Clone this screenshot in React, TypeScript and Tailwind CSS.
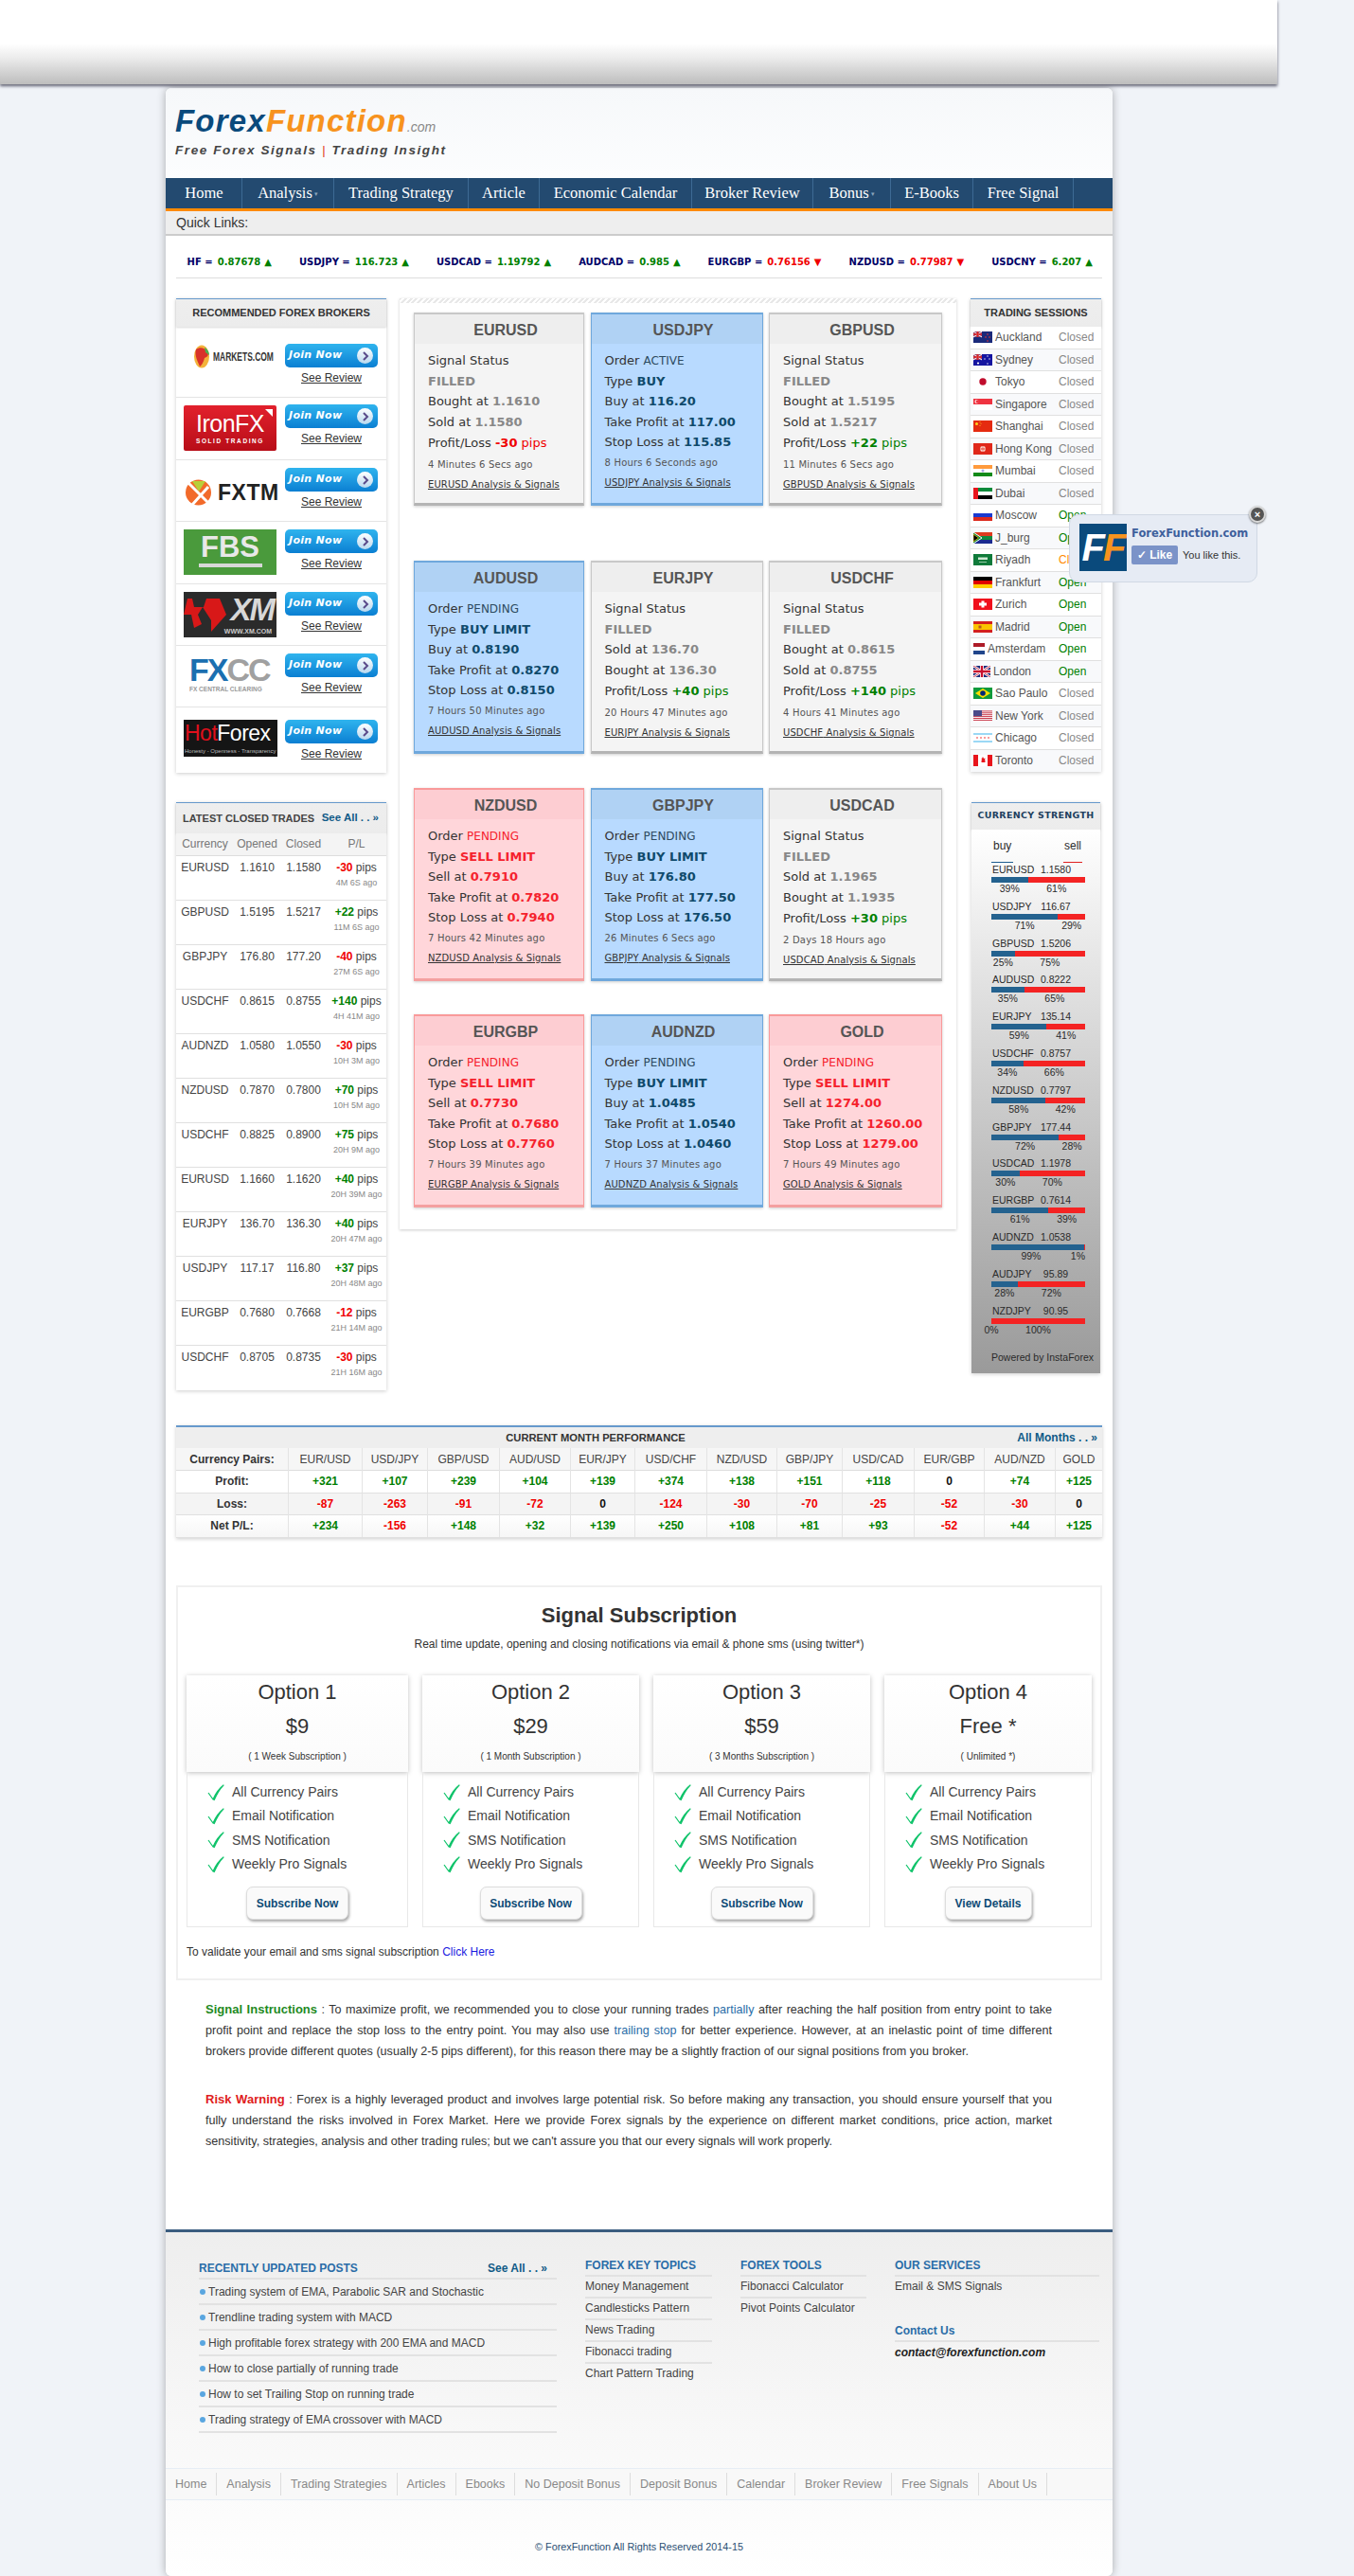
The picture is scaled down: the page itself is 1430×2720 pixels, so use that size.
import React from 'react';

type Tone = 'gray' | 'blue' | 'red';

interface Signal {
  pair: string;
  tone: Tone;
  status?: string;
  type?: string;
  lines: [string, string][];
  pl?: string;
  ago: string;
}

const signalRows: { top: string; cards: Signal[] }[] = [
  {
    top: 'mt-[10px]',
    cards: [
      { pair: 'EURUSD', tone: 'gray', lines: [['Bought at', '1.1610'], ['Sold at', '1.1580']], pl: '-30', ago: '4 Minutes 6 Secs ago' },
      { pair: 'USDJPY', tone: 'blue', status: 'ACTIVE', type: 'BUY', lines: [['Buy at', '116.20'], ['Take Profit at', '117.00'], ['Stop Loss at', '115.85']], ago: '8 Hours 6 Seconds ago' },
      { pair: 'GBPUSD', tone: 'gray', lines: [['Bought at', '1.5195'], ['Sold at', '1.5217']], pl: '+22', ago: '11 Minutes 6 Secs ago' },
    ],
  },
  {
    top: 'mt-[58px]',
    cards: [
      { pair: 'AUDUSD', tone: 'blue', status: 'PENDING', type: 'BUY LIMIT', lines: [['Buy at', '0.8190'], ['Take Profit at', '0.8270'], ['Stop Loss at', '0.8150']], ago: '7 Hours 50 Minutes ago' },
      { pair: 'EURJPY', tone: 'gray', lines: [['Sold at', '136.70'], ['Bought at', '136.30']], pl: '+40', ago: '20 Hours 47 Minutes ago' },
      { pair: 'USDCHF', tone: 'gray', lines: [['Bought at', '0.8615'], ['Sold at', '0.8755']], pl: '+140', ago: '4 Hours 41 Minutes ago' },
    ],
  },
  {
    top: 'mt-[36px]',
    cards: [
      { pair: 'NZDUSD', tone: 'red', status: 'PENDING', type: 'SELL LIMIT', lines: [['Sell at', '0.7910'], ['Take Profit at', '0.7820'], ['Stop Loss at', '0.7940']], ago: '7 Hours 42 Minutes ago' },
      { pair: 'GBPJPY', tone: 'blue', status: 'PENDING', type: 'BUY LIMIT', lines: [['Buy at', '176.80'], ['Take Profit at', '177.50'], ['Stop Loss at', '176.50']], ago: '26 Minutes 6 Secs ago' },
      { pair: 'USDCAD', tone: 'gray', lines: [['Sold at', '1.1965'], ['Bought at', '1.1935']], pl: '+30', ago: '2 Days 18 Hours ago' },
    ],
  },
  {
    top: 'mt-[35px]',
    cards: [
      { pair: 'EURGBP', tone: 'red', status: 'PENDING', type: 'SELL LIMIT', lines: [['Sell at', '0.7730'], ['Take Profit at', '0.7680'], ['Stop Loss at', '0.7760']], ago: '7 Hours 39 Minutes ago' },
      { pair: 'AUDNZD', tone: 'blue', status: 'PENDING', type: 'BUY LIMIT', lines: [['Buy at', '1.0485'], ['Take Profit at', '1.0540'], ['Stop Loss at', '1.0460']], ago: '7 Hours 37 Minutes ago' },
      { pair: 'GOLD', tone: 'red', status: 'PENDING', type: 'SELL LIMIT', lines: [['Sell at', '1274.00'], ['Take Profit at', '1260.00'], ['Stop Loss at', '1279.00']], ago: '7 Hours 49 Minutes ago' },
    ],
  },
];

const toneStyles = {
  gray: { card: 'bg-[#f4f4f4] border-[#c8c8c8] border-b-[#b4b4b4]', head: 'bg-[#eeeeee]', value: 'text-[#888888]', status: 'text-[#888888]' },
  blue: { card: 'bg-[#b8daff] border-[#6fa8dc] border-b-[#6fa8dc]', head: 'bg-[#b0d2f4]', value: 'text-[#0f4a6b]', status: 'text-[#2d4a60]' },
  red: { card: 'bg-[#ffd6da] border-[#f99a9a] border-b-[#f4a0a0]', head: 'bg-[#fdcdd2]', value: 'text-[#f5222d]', status: 'text-[#f5222d]' },
};

const SignalCard: React.FC<{ data: Signal; width: string }> = ({ data, width }) => {
  const tone = toneStyles[data.tone];
  const filled = data.tone === 'gray';
  return (
    <div className={`${width} h-[204px] border border-b-[3px] border-t-[2px] ${tone.card} shadow-[0_1px_3px_rgba(0,0,0,0.2)] font-['DejaVu_Sans',Verdana,sans-serif] text-[#333333]`}>
      <div className={`${tone.head} h-[31px] pl-[14px] text-center font-['Liberation_Sans',Arial,sans-serif] text-[16px] leading-[33px] font-bold text-[#555555]`}>
        {data.pair}
      </div>
      <div className="pl-[14px]">
        {filled ? (
          <div className="pt-[7px] text-[13px] leading-[21.7px]">
            <div>Signal Status</div>
            <div className={`font-bold ${tone.value}`}>FILLED</div>
            {data.lines.map(([label, value]) => (
              <div key={label}>
                {label} <span className={`font-bold ${tone.value}`}>{value}</span>
              </div>
            ))}
            <div>
              Profit/Loss{' '}
              {data.pl?.startsWith('-') ? (
                <span className="text-[#f00000]"><b>{data.pl}</b> pips</span>
              ) : (
                <span className="text-[#008000]"><b>{data.pl}</b> pips</span>
              )}
            </div>
          </div>
        ) : (
          <div className="pt-[7px] text-[13px] leading-[21.2px]">
            <div>
              Order <span className={`text-[12px] ${tone.status}`}>{data.status}</span>
            </div>
            <div>
              Type <span className={`font-bold ${tone.value}`}>{data.type}</span>
            </div>
            {data.lines.map(([label, value]) => (
              <div key={label}>
                {label} <span className={`font-bold ${tone.value}`}>{value}</span>
              </div>
            ))}
          </div>
        )}
        <div className="mt-[1px] text-[10px] leading-[22px] tracking-[0.2px] text-[#555555]">{data.ago}</div>
        <a className="block text-[10px] leading-[20px] tracking-[0.1px] whitespace-nowrap text-[#333333] underline">
          {data.pair} Analysis &amp; Signals
        </a>
      </div>
    </div>
  );
};

const PanelHead: React.FC<{ children: React.ReactNode; className?: string }> = ({ children, className }) => (
  <div className={`border-t border-t-[#6699cc] bg-gradient-to-b from-[#eeeeee] to-[#ececec] shadow-[0_1px_2px_rgba(0,0,0,0.15)] ${className ?? ''}`}>
    {children}
  </div>
);

const JoinButton = () => (
  <div className="flex h-[25px] w-[98px] items-center justify-between rounded-[5px] bg-gradient-to-b from-[#2fb4ee] to-[#0a7fd2] pr-[5px] pl-[4px]">
    <span className="font-['DejaVu_Sans',sans-serif] text-[11px] font-bold tracking-[0.3px] whitespace-nowrap text-white italic">Join Now</span>
    <span className="flex h-[17px] w-[17px] items-center justify-center rounded-full bg-gradient-to-b from-white to-[#b8d8ee]">
      <svg width="8" height="10" viewBox="0 0 8 10"><path d="M2 1l4 4-4 4" fill="none" stroke="#5a4a8a" strokeWidth="2" /></svg>
    </span>
  </div>
);

const MarketsLogo = () => (
  <div className="flex h-[27px] items-center pl-[10px]">
    <svg className="shrink-0" width="18" height="27" viewBox="0 0 18 27">
      <ellipse cx="9" cy="13.5" rx="8" ry="12" fill="#f3b23a" />
      <path d="M3 6c4-3 9-2 12 2 2 4 0 6-3 7-1 4-3 8-5 9-2-5-6-12-4-18z" fill="#d8322a" />
      <path d="M12 4c3 1 5 5 5 8l-4-3z" fill="#4caf50" />
    </svg>
    <span className="ml-[3px] inline-block origin-left scale-x-[0.65] text-[13px] font-bold whitespace-nowrap text-[#333333]">MARKETS.COM</span>
  </div>
);

const IronLogo = () => (
  <div className="relative h-[48px] w-[98px] rounded-[2px] bg-gradient-to-b from-[#e2202c] to-[#b80d18] pt-[6px] text-center text-white">
    <div className="font-['Liberation_Sans',sans-serif] text-[25px] leading-[27px] tracking-[-0.5px]">IronFX</div>
    <div className="font-['Liberation_Sans',sans-serif] text-[6.5px] leading-[10px] font-bold tracking-[1.6px]">SOLID TRADING</div>
    <div className="absolute top-[4px] right-[4px] h-0 w-0 border-t-[8px] border-l-[8px] border-t-white border-l-transparent" />
  </div>
);

const FxtmLogo = () => (
  <div className="flex h-[30px] items-center pl-[2px]">
    <svg className="shrink-0" width="27" height="30" viewBox="0 0 27 30">
      <circle cx="13.5" cy="15" r="13.5" fill="#f26a2a" />
      <path d="M7 3l7 11 7-11z" fill="#b8cf3a" />
      <path d="M3 5l21 21M24 9L7 28" stroke="#fff" strokeWidth="3" />
    </svg>
    <span className="ml-[7px] font-['Liberation_Sans',sans-serif] text-[23px] font-bold tracking-[0.5px] text-[#222222]">FXTM</span>
  </div>
);

const FbsLogo = () => (
  <div className="h-[48px] w-[98px] bg-[#4a9a3c] pt-[3px] text-center">
    <div className="font-['Liberation_Sans',sans-serif] text-[31px] leading-[32px] font-bold text-[#e8e8e8]">FBS</div>
    <div className="mx-auto mt-[1px] h-[4px] w-[67px] bg-[#d8d8d8]" />
  </div>
);

const XmLogo = () => (
  <div className="relative h-[48px] w-[98px] bg-[#2b2b2b] text-right">
    <svg className="absolute top-[6px] left-0" width="46" height="36" viewBox="0 0 46 36">
      <path d="M4 1h5l2 9h10l3-9h14l7 17-16 18V24L20 10 15 18l4 10-8 4-3-14H0z" fill="#d81818" />
    </svg>
    <div className="pr-[3px] font-['Liberation_Sans',sans-serif] text-[33px] leading-[38px] font-bold tracking-[-2px] text-[#d8d8d8] italic">XM</div>
    <div className="pr-[5px] font-['Liberation_Sans',sans-serif] text-[7px] leading-[8px] font-bold text-[#cccccc]">WWW.XM.COM</div>
  </div>
);

const FxccLogo = () => (
  <div className="pl-[6px]">
    <div className="flex h-[31px] items-center font-['Liberation_Sans',sans-serif] text-[34px] leading-[31px] font-bold tracking-[-2px]">
      <span className="text-[#1b6fb0]">FX</span>
      <span className="text-[#a0a0a0]">CC</span>
    </div>
    <div className="font-['Liberation_Sans',sans-serif] text-[6.5px] leading-[10px] font-bold whitespace-nowrap text-[#999999]">FX CENTRAL CLEARING</div>
  </div>
);

const HotLogo = () => (
  <div className="h-[39px] w-[99px] overflow-hidden bg-[#151515] pl-[1px] text-white">
    <div className="font-['Liberation_Sans',sans-serif] text-[23px] leading-[29px] tracking-[-0.5px] whitespace-nowrap">
      <span className="text-[#e0101c]">Hot</span>Forex
    </div>
    <div className="font-['Liberation_Sans',sans-serif] text-[6px] leading-[8px] whitespace-nowrap text-[#bbbbbb]">Honesty - Openness - Transparency</div>
  </div>
);

const brokers = [
  { logo: <MarketsLogo />, row: 'h-[75px] pt-[18px]', logoTop: 'mt-0' },
  { logo: <IronLogo />, row: 'h-[66px] pt-[7px]', logoTop: 'mt-px' },
  { logo: <FxtmLogo />, row: 'h-[65px] pt-[8px]', logoTop: 'mt-[11px]' },
  { logo: <FbsLogo />, row: 'h-[66px] pt-[8px]', logoTop: 'mt-0' },
  { logo: <XmLogo />, row: 'h-[65px] pt-[8px]', logoTop: 'mt-0' },
  { logo: <FxccLogo />, row: 'h-[65px] pt-[8px]', logoTop: 'mt-[2px]' },
  { logo: <HotLogo />, row: 'h-[69px] pt-[13px]', logoTop: 'mt-0' },
];

const trades = [
  ['EURUSD', '1.1610', '1.1580', '-30', '4M 6S ago'],
  ['GBPUSD', '1.5195', '1.5217', '+22', '11M 6S ago'],
  ['GBPJPY', '176.80', '177.20', '-40', '27M 6S ago'],
  ['USDCHF', '0.8615', '0.8755', '+140', '4H 41M ago'],
  ['AUDNZD', '1.0580', '1.0550', '-30', '10H 3M ago'],
  ['NZDUSD', '0.7870', '0.7800', '+70', '10H 5M ago'],
  ['USDCHF', '0.8825', '0.8900', '+75', '20H 9M ago'],
  ['EURUSD', '1.1660', '1.1620', '+40', '20H 39M ago'],
  ['EURJPY', '136.70', '136.30', '+40', '20H 47M ago'],
  ['USDJPY', '117.17', '116.80', '+37', '20H 48M ago'],
  ['EURGBP', '0.7680', '0.7668', '-12', '21H 14M ago'],
  ['USDCHF', '0.8705', '0.8735', '-30', '21H 16M ago'],
];

const R: React.FC<{ y: number; h: number; c: string }> = ({ y, h, c }) => <rect x="0" y={y} width="20" height={h} fill={c} />;

const flags: Record<string, React.ReactNode> = {
  Auckland: <><R y={0} h={12} c="#1a2a7a" /><rect width="9" height="6" fill="#9a4a70" /><path d="M0 0l9 6M9 0L0 6" stroke="#fff" strokeWidth="1" /><path d="M4.5 0v6M0 3h9" stroke="#d22" strokeWidth="1.4" /><circle cx="15" cy="3" r=".8" fill="#e33" /><circle cx="13" cy="6" r=".8" fill="#e33" /><circle cx="17" cy="6" r=".8" fill="#e33" /><circle cx="15" cy="10" r=".8" fill="#e33" /></>,
  Sydney: <><R y={0} h={12} c="#1414a0" /><rect width="9" height="6" fill="#9a4a70" /><path d="M0 0l9 6M9 0L0 6" stroke="#fff" strokeWidth="1" /><path d="M4.5 0v6M0 3h9" stroke="#d22" strokeWidth="1.4" /><circle cx="5" cy="9.5" r="1.1" fill="#fff" /><circle cx="15" cy="2" r=".7" fill="#fff" /><circle cx="12" cy="5" r=".7" fill="#fff" /><circle cx="17" cy="5" r=".7" fill="#fff" /><circle cx="15" cy="10" r=".7" fill="#fff" /></>,
  Tokyo: <><R y={0} h={12} c="#ffffff" /><circle cx="10" cy="6" r="3.7" fill="#c00c2c" /></>,
  Singapore: <><R y={0} h={6} c="#ef3340" /><R y={6} h={6} c="#ffffff" /><circle cx="3.5" cy="3" r="2" fill="#fff" /><circle cx="4.3" cy="3" r="1.8" fill="#ef3340" /></>,
  Shanghai: <><R y={0} h={12} c="#e52b10" /><circle cx="3.5" cy="3.5" r="1.5" fill="#ffd520" /><circle cx="7" cy="1.5" r=".5" fill="#ffd520" /><circle cx="8" cy="3.2" r=".5" fill="#ffd520" /><circle cx="7" cy="5.4" r=".5" fill="#ffd520" /></>,
  'Hong Kong': <><R y={0} h={12} c="#e0281a" /><circle cx="10" cy="6" r="3" fill="#fbd8d0" /><path d="M10 3v6M7 5l6 2M13 5L7 7" stroke="#e0281a" strokeWidth=".5" /></>,
  Mumbai: <><R y={0} h={4} c="#ff9a3c" /><R y={4} h={4} c="#ffffff" /><R y={8} h={4} c="#138a18" /><circle cx="10" cy="6" r="1.5" fill="#a8a8e0" /></>,
  Dubai: <><R y={0} h={4} c="#0a8a3a" /><R y={4} h={4} c="#ffffff" /><R y={8} h={4} c="#000000" /><rect width="5" height="12" fill="#e8141c" /></>,
  Moscow: <><R y={0} h={4} c="#ffffff" /><R y={4} h={4} c="#1a3ad0" /><R y={8} h={4} c="#dc2a1e" /></>,
  J_burg: <><R y={0} h={4} c="#e03a1e" /><R y={4} h={4} c="#108a40" /><R y={8} h={4} c="#1a2a90" /><path d="M0 0l9 6-9 6" fill="#108a40" stroke="#fff" strokeWidth="1" /><path d="M0 2l5.5 4L0 10z" fill="#000" stroke="#fc0" strokeWidth=".7" /></>,
  Riyadh: <><R y={0} h={12} c="#0f7a3a" /><rect x="5" y="3.5" width="10" height="2.5" fill="#cfe8d4" /><rect x="6" y="8" width="8" height=".7" fill="#cfe8d4" /></>,
  Frankfurt: <><R y={0} h={4} c="#000000" /><R y={4} h={4} c="#e00000" /><R y={8} h={4} c="#ffce00" /></>,
  Zurich: <><R y={0} h={12} c="#f0101c" /><path d="M8.5 2.5h3v2h2.5v3h-2.5v2h-3v-2H6v-3h2.5z" fill="#fff" /></>,
  Madrid: <><R y={0} h={3} c="#d4201e" /><R y={3} h={6} c="#fbc400" /><R y={9} h={3} c="#d4201e" /><rect x="5.5" y="4.5" width="3" height="3" fill="#b85a20" /></>,
  'Sao Paulo': <><R y={0} h={12} c="#0f9a3c" /><path d="M10 1l8 5-8 5-8-5z" fill="#fedf00" /><circle cx="10" cy="6" r="2.8" fill="#002776" /></>,
  'New York': <><R y={0} h={12} c="#ffffff" /><path d="M0 .9h20M0 2.8h20M0 4.7h20M0 6.6h20M0 8.5h20M0 10.4h20" stroke="#c8384a" strokeWidth="1" /><rect width="9" height="6.2" fill="#4a4a8a" /></>,
  Chicago: <><R y={0} h={12} c="#ffffff" /><R y={1} h={2} c="#9bd8f5" /><R y={9} h={2} c="#9bd8f5" /><circle cx="4" cy="6" r=".8" fill="#e22" /><circle cx="8" cy="6" r=".8" fill="#e22" /><circle cx="12" cy="6" r=".8" fill="#e22" /><circle cx="16" cy="6" r=".8" fill="#e22" /></>,
  Toronto: <><R y={0} h={12} c="#ffffff" /><rect width="5" height="12" fill="#e8141c" /><rect x="15" width="5" height="12" fill="#e8141c" /><path d="M10 2l1 2 1.5-.5-.5 3 1-.2-.8 1.6H8.8l-.8-1.6 1 .2-.5-3L9 4z" fill="#e8141c" /></>,
};

const sessions: [string, string][] = [
  ['Auckland', 'Closed'], ['Sydney', 'Closed'], ['Tokyo', 'Closed'], ['Singapore', 'Closed'], ['Shanghai', 'Closed'],
  ['Hong Kong', 'Closed'], ['Mumbai', 'Closed'], ['Dubai', 'Closed'], ['Moscow', 'Open'], ['J_burg', 'Open'],
  ['Riyadh', 'Closing'], ['Frankfurt', 'Open'], ['Zurich', 'Open'], ['Madrid', 'Open'], ['Amsterdam', 'Open'],
  ['London', 'Open'], ['Sao Paulo', 'Closed'], ['New York', 'Closed'], ['Chicago', 'Closed'], ['Toronto', 'Closed'],
];

const FlagIcon: React.FC<{ name: string }> = ({ name }) => {
  if (name === 'Amsterdam') {
    return (
      <svg className="mr-[3px] shrink-0" width="12" height="12" viewBox="0 0 12 12">
        <rect width="12" height="4" fill="#ae1c28" /><rect y="4" width="12" height="4" fill="#fff" /><rect y="8" width="12" height="4" fill="#21468b" />
      </svg>
    );
  }
  if (name === 'London') {
    return (
      <svg className="mr-[3px] shrink-0" width="18" height="12" viewBox="0 0 18 12">
        <rect width="18" height="12" fill="#1a2a7a" /><path d="M0 0l18 12M18 0L0 12" stroke="#fff" strokeWidth="2.4" /><path d="M0 0l18 12M18 0L0 12" stroke="#c8102e" strokeWidth=".8" /><path d="M9 0v12M0 6h18" stroke="#fff" strokeWidth="4" /><path d="M9 0v12M0 6h18" stroke="#c8102e" strokeWidth="2.4" />
      </svg>
    );
  }
  return (
    <svg className="mr-[3px] shrink-0" width="20" height="12" viewBox="0 0 20 12">{flags[name]}</svg>
  );
};

const strength: [string, string, number][] = [
  ['EURUSD', '1.1580', 39], ['USDJPY', '116.67', 71], ['GBPUSD', '1.5206', 25], ['AUDUSD', '0.8222', 35],
  ['EURJPY', '135.14', 59], ['USDCHF', '0.8757', 34], ['NZDUSD', '0.7797', 58], ['GBPJPY', '177.44', 72],
  ['USDCAD', '1.1978', 30], ['EURGBP', '0.7614', 61], ['AUDNZD', '1.0538', 99], ['AUDJPY', '95.89', 28], ['NZDJPY', '90.95', 0],
];

const perfCols = ['EUR/USD', 'USD/JPY', 'GBP/USD', 'AUD/USD', 'EUR/JPY', 'USD/CHF', 'NZD/USD', 'GBP/JPY', 'USD/CAD', 'EUR/GBP', 'AUD/NZD', 'GOLD'];
const perfRows = [
  { label: 'Profit:', bg: 'bg-white', cells: ['+321', '+107', '+239', '+104', '+139', '+374', '+138', '+151', '+118', '0', '+74', '+125'] },
  { label: 'Loss:', bg: 'bg-[#f4f4f4]', cells: ['-87', '-263', '-91', '-72', '0', '-124', '-30', '-70', '-25', '-52', '-30', '0'] },
  { label: 'Net P/L:', bg: 'bg-gradient-to-b from-white to-[#f6f6f6]', cells: ['+234', '-156', '+148', '+32', '+139', '+250', '+108', '+81', '+93', '-52', '+44', '+125'] },
];
const perfGrid = 'grid grid-cols-[119px_78px_69px_76px_75px_68px_76px_74px_69px_76px_74px_75px_49px]';

const perfColor = (v: string) => (v.startsWith('+') ? 'text-[#008000]' : v.startsWith('-') ? 'text-[#f00000]' : 'text-[#111111]');

const options = [
  { name: 'Option 1', price: '$9', note: '( 1 Week Subscription )', cta: 'Subscribe Now', width: 'w-[234px]', btn: 'w-[108px]' },
  { name: 'Option 2', price: '$29', note: '( 1 Month Subscription )', cta: 'Subscribe Now', width: 'w-[229px]', btn: 'w-[108px]' },
  { name: 'Option 3', price: '$59', note: '( 3 Months Subscription )', cta: 'Subscribe Now', width: 'w-[229px]', btn: 'w-[108px]' },
  { name: 'Option 4', price: 'Free *', note: '( Unlimited *)', cta: 'View Details', width: 'w-[219px]', btn: 'w-[92px]' },
];

const features = ['All Currency Pairs', 'Email Notification', 'SMS Notification', 'Weekly Pro Signals'];

const posts = [
  'Trading system of EMA, Parabolic SAR and Stochastic',
  'Trendline trading system with MACD',
  'High profitable forex strategy with 200 EMA and MACD',
  'How to close partially of running trade',
  'How to set Trailing Stop on running trade',
  'Trading strategy of EMA crossover with MACD',
];

const navItems = [
  { label: 'Home', w: 'w-[80px]' },
  { label: 'Analysis', w: 'w-[97px]', caret: true },
  { label: 'Trading Strategy', w: 'w-[142px]' },
  { label: 'Article', w: 'w-[75px]' },
  { label: 'Economic Calendar', w: 'w-[161px]' },
  { label: 'Broker Review', w: 'w-[128px]' },
  { label: 'Bonus', w: 'w-[82px]', caret: true },
  { label: 'E-Books', w: 'w-[87px]' },
  { label: 'Free Signal', w: 'w-[106px]' },
];

const ticker: [string, string, boolean][] = [
  ['USDCHF', '0.87678', true], ['USDJPY', '116.723', true], ['USDCAD', '1.19792', true], ['AUDCAD', '0.985', true],
  ['EURGBP', '0.76156', false], ['NZDUSD', '0.77987', false], ['USDCNY', '6.207', true],
];

const bottomLinks = ['Home', 'Analysis', 'Trading Strategies', 'Articles', 'Ebooks', 'No Deposit Bonus', 'Deposit Bonus', 'Calendar', 'Broker Review', 'Free Signals', 'About Us'];

const FootTitle: React.FC<{ children: React.ReactNode }> = ({ children }) => (
  <div className="h-[21px] border-b-2 border-b-[#e2e2e2] text-[12px] leading-[18px] font-bold text-[#2a6da8]">{children}</div>
);

export default function App() {
  return (
    <div className="relative h-[2720px] w-full overflow-hidden bg-[#f0f3f8] font-['Liberation_Sans',Arial,sans-serif]">
      <div className="relative z-10 h-[89px] w-[1349px] bg-gradient-to-b from-white from-[52%] via-[#eaeaea] via-[70%] to-[#bdbdbd] shadow-[0_2px_3px_rgba(40,40,60,0.7)]" />

      <div className="relative mt-[4px] ml-[175px] h-[2627px] w-[1000px] rounded-[6px] bg-white shadow-[0_0_10px_rgba(0,0,0,0.3)]">
        <div className="h-[95px] rounded-t-[6px] bg-gradient-to-b from-[#f6f8fa] to-[#fcfdfe] pt-[19px] pl-[10px]">
          <div className="text-[33px] leading-[32px] font-bold tracking-[1.2px] whitespace-nowrap italic">
            <span className="text-[#0a4a7c]">Forex</span>
            <span className="text-[#f7931e]">Function</span>
            <span className="text-[14px] font-normal tracking-normal text-[#888888]">.com</span>
          </div>
          <div className="mt-[1px] text-[13.5px] leading-[15px] font-bold tracking-[1.6px] whitespace-nowrap text-[#444444] italic">
            Free Forex Signals <span className="font-normal text-[#e0401c]">|</span> Trading Insight
          </div>
        </div>

        <nav className="flex h-[32px] bg-[#234a70] pl-px font-['Liberation_Serif',serif] text-[16.5px] leading-[32px] text-white">
          {navItems.map((item) => (
            <a key={item.label} className={`${item.w} border-r border-r-[#3d6a94] text-center whitespace-nowrap`}>
              {item.label}
              {item.caret && <span className="ml-[2px] align-middle text-[7px] text-[#8aa4bc]">▾</span>}
            </a>
          ))}
        </nav>
        <div className="h-[3px] bg-[#ff8a00]" />
        <div className="h-[26px] border-b-2 border-b-[#cccccc] bg-[#eeeeee] pl-[11px] text-[14px] leading-[24px] text-[#333333]">Quick Links:</div>

        <div className="mx-[11px] h-[45px] border-b border-b-[#dddddd] pt-[20px]">
          <div className="ml-[11px] flex w-[957px] justify-end gap-[29px] overflow-hidden font-['DejaVu_Sans',sans-serif] text-[10px] leading-[16px] font-bold whitespace-nowrap">
            {ticker.map(([pair, rate, up]) => (
              <span key={pair} className="flex shrink-0 text-[#000066]">
                <span>{pair} =</span>
                <span className={`ml-[5px] ${up ? 'text-[#008000]' : 'text-[#f00000]'}`}>{rate}</span>
                <span className={`ml-[4px] ${up ? 'text-[#008000]' : 'text-[#f00000]'}`}>{up ? '▲' : '▼'}</span>
              </span>
            ))}
          </div>
        </div>

        <div className="mt-[21px] flex gap-[14px] pl-[11px]">
          <div className="w-[222px]">
            <div className="h-[501px] shadow-[0_1px_4px_rgba(0,0,0,0.2)]">
              <PanelHead className="h-[30px] text-center text-[11px] leading-[28px] font-bold text-[#333333]">RECOMMENDED FOREX BROKERS</PanelHead>
              {brokers.map((b, i) => (
                <div key={i} className={`flex border-b border-b-[#e4e4e4] pl-[8px] last:border-b-0 ${b.row}`}>
                  <div className={`w-[98px] shrink-0 ${b.logoTop}`}>{b.logo}</div>
                  <div className="ml-[9px]">
                    <JoinButton />
                    <a className="mt-[4px] block text-center text-[12px] leading-[14px] text-[#333333] underline">See Review</a>
                  </div>
                </div>
              ))}
            </div>

            <div className="mt-[31px] h-[621px] shadow-[0_1px_4px_rgba(0,0,0,0.2)]">
              <PanelHead className="flex h-[33px] items-center justify-between pr-[8px] pl-[7px]">
                <span className="text-[11px] font-bold whitespace-nowrap text-[#444444]">LATEST CLOSED TRADES</span>
                <span className="text-[11.5px] font-bold whitespace-nowrap text-[#105a87]">See All . . »</span>
              </PanelHead>
              <div className="grid h-[24px] grid-cols-[61px_49px_49px_63px] border-b border-b-[#dddddd] bg-[#f4f4f4] text-center text-[12px] leading-[22px] text-[#777777]">
                <span>Currency</span>
                <span>Opened</span>
                <span>Closed</span>
                <span>P/L</span>
              </div>
              {trades.map(([pair, open, close, pl, ago], i) => (
                <div key={i} className="grid h-[47px] grid-cols-[61px_49px_49px_63px] border-b border-b-[#e0e0e0] pt-[3px] text-center text-[12px] leading-[18px] text-[#444444] last:border-b-0">
                  <span>{pair}</span>
                  <span>{open}</span>
                  <span>{close}</span>
                  <div className="whitespace-nowrap">
                    <b className={pl.startsWith('-') ? 'text-[#f00000]' : 'text-[#008000]'}>{pl}</b> pips
                    <div className="text-[9px] leading-[15px] text-[#888888]">{ago}</div>
                  </div>
                </div>
              ))}
            </div>
          </div>

          <div className="h-[983px] w-[588px] self-start shadow-[0_1px_3px_rgba(0,0,0,0.2)]">
            <div className="h-[5px] bg-[repeating-linear-gradient(135deg,#e8e8e8_0,#e8e8e8_2px,#ffffff_2px,#ffffff_4px)]" />
            <div className="pl-[15px]">
              {signalRows.map((row) => (
                <div key={row.cards[0].pair} className={`flex gap-[6.5px] ${row.top}`}>
                  <SignalCard data={row.cards[0]} width="w-[180px]" />
                  <SignalCard data={row.cards[1]} width="w-[182px]" />
                  <SignalCard data={row.cards[2]} width="w-[183px]" />
                </div>
              ))}
            </div>
          </div>

          <div className="ml-px w-[138px]">
            <div className="h-[500px] shadow-[0_1px_4px_rgba(0,0,0,0.2)]">
              <PanelHead className="h-[30px] text-center text-[11px] leading-[28px] font-bold text-[#333333]">TRADING SESSIONS</PanelHead>
              {sessions.map(([city, state], i) => (
                <div key={city} className={`flex h-[23.5px] items-center border-b border-b-[#e0e0e0] pl-[3px] text-[12px] last:border-b-0 ${i % 2 ? 'bg-[#f8f9fb]' : 'bg-white'}`}>
                  <FlagIcon name={city} />
                  <span className="w-[64px] flex-1 whitespace-nowrap text-[#555555]">{city}</span>
                  <span className={`w-[45px] shrink-0 ${state === 'Open' ? 'font-medium text-[#008000]' : state === 'Closing' ? 'text-[#ff8a00]' : 'text-[#888888]'}`}>
                    {state}
                  </span>
                </div>
              ))}
            </div>

            <div className="mt-[32px] ml-px h-[603px] w-[136px] shadow-[0_1px_4px_rgba(0,0,0,0.2)]">
              <PanelHead className="h-[29px] text-center font-['DejaVu_Sans',sans-serif] text-[9.5px] leading-[26px] font-bold tracking-[0.3px] text-[#223f5f]">CURRENCY STRENGTH</PanelHead>
              <div className="h-[574px] bg-gradient-to-b from-white to-[#9a9a9a] pl-[21px] text-[10.5px] text-[#2a2a2a]">
                <div className="flex h-[35px] w-[99px] justify-between pt-[8px] text-[12px] leading-[18px]">
                  <span className="w-[23px] border-b border-b-[#1e5c90] pl-[2px]">buy</span>
                  <span className="mr-[3px] w-[20px] border-b border-b-[#e02020] text-center">sell</span>
                </div>
                {strength.map(([pair, price, buy]) => (
                  <div key={pair} className="h-[38.8px] w-[99px]">
                    <div className="grid grid-cols-[42px_50px] pl-px leading-[15px]">
                      <span className="whitespace-nowrap">{pair}</span>
                      <span className="text-center">{price}</span>
                    </div>
                    <div className="flex h-[6px]">
                      <div className="bg-[#24628f]" style={{ width: `${buy}%` }} />
                      <div className="flex-1 bg-[#f42323]" />
                    </div>
                    <div className="flex leading-[12px]">
                      <div className="flex justify-center whitespace-nowrap" style={{ width: `${buy}%` }}>{buy}%</div>
                      <div className="flex flex-1 justify-center whitespace-nowrap">{100 - buy}%</div>
                    </div>
                  </div>
                ))}
                <div className="mt-[11px] text-[10.5px] leading-[14px] whitespace-nowrap">Powered by InstaForex</div>
              </div>
            </div>
          </div>
        </div>

        <div className="mx-[11px] mt-[37px] h-[119px] w-[978px] shadow-[0_1px_4px_rgba(0,0,0,0.2)]">
          <div className="relative h-[24px] border-t-2 border-t-[#6699cc] bg-[#eeeeee] pr-[92px] text-center text-[11.2px] leading-[22px] font-bold text-[#333333]">
            CURRENT MONTH PERFORMANCE
            <span className="absolute top-0 right-[5px] text-[12px] text-[#105a87]">All Months . . »</span>
          </div>
          <div className={`${perfGrid} h-[24px] border-b border-b-[#dddddd] bg-[#f6f6f6] text-center text-[12px] leading-[24px] text-[#444444]`}>
            <span className="border-r border-r-[#e4e4e4] font-bold text-[#333333]">Currency Pairs:</span>
            {perfCols.map((c) => (
              <span key={c} className="border-r border-r-[#e4e4e4] last:border-r-0">{c}</span>
            ))}
          </div>
          {perfRows.map((row) => (
            <div key={row.label} className={`${perfGrid} h-[23.6px] border-b border-b-[#e0e0e0] text-center text-[12px] leading-[23px] font-bold ${row.bg}`}>
              <span className="border-r border-r-[#e4e4e4] text-[#333333]">{row.label}</span>
              {row.cells.map((v, i) => (
                <span key={i} className={`border-r border-r-[#e4e4e4] last:border-r-0 ${perfColor(v)}`}>{v}</span>
              ))}
            </div>
          ))}
        </div>

        <div className="mx-[11px] mt-[50px] h-[417px] w-[978px] border-2 border-[#f0f0f0] text-[#333333]">
          <h2 className="mt-[16px] text-center text-[22px] leading-[28px] font-bold">Signal Subscription</h2>
          <p className="mt-[8px] text-center text-[12px] leading-[16px]">Real time update, opening and closing notifications via email &amp; phone sms (using twitter*)</p>
          <div className="mt-[25px] flex gap-[15px] pl-[9px]">
            {options.map((o) => (
              <div key={o.name} className={`${o.width} shrink-0`}>
                <div className="h-[102px] bg-gradient-to-b from-white to-[#fbfbfb] pt-[6px] text-center shadow-[0_1px_5px_rgba(0,0,0,0.25)]">
                  <div className="text-[22px] leading-[24px]">{o.name}</div>
                  <div className="mt-[12px] text-[22px] leading-[24px]">{o.price}</div>
                  <div className="mt-[13px] text-[10px] leading-[14px]">{o.note}</div>
                </div>
                <div className="h-[164px] border border-t-0 border-[#e8e8e8] pt-[9px] pl-[20px] text-center">
                  {features.map((f) => (
                    <div key={f} className="flex h-[25.3px] items-center text-[14px] text-[#444444]">
                      <svg className="mr-[7px] shrink-0" width="20" height="18" viewBox="0 0 20 18">
                        <path d="M2 9l5 7C10 9 14 4 18 1c-4 4-7 9-10 16" fill="#0fc36a" stroke="#0fc36a" strokeWidth="1.2" strokeLinejoin="round" />
                      </svg>
                      {f}
                    </div>
                  ))}
                  <button className={`${o.btn} mt-[11px] -ml-[20px] h-[35px] rounded-[7px] border border-[#dddddd] bg-[#fafafa] text-[12px] font-bold text-[#0d4a75] shadow-[1px_2px_3px_rgba(0,0,0,0.35)]`}>
                    {o.cta}
                  </button>
                </div>
              </div>
            ))}
          </div>
          <p className="mt-[18px] pl-[9px] text-[12px] leading-[16px]">
            To validate your email and sms signal subscription <a className="text-[#1a1ae0]">Click Here</a>
          </p>
        </div>

        <div className="mt-[20px] mr-[64px] ml-[42px] text-justify text-[12.6px] leading-[22px] text-[#333333]">
          <p>
            <b className="text-[13px] text-[#1f8a1f]">Signal Instructions</b> : To maximize profit, we recommended you to close your running trades <a className="text-[#2a6da8]">partially</a> after reaching the half position from entry point to take profit point and replace the stop loss to the entry point. You may also use <a className="text-[#2a6da8]">trailing stop</a> for better experience. However, at an inelastic point of time different brokers provide different quotes (usually 2-5 pips different), for this reason there may be a slightly fraction of our signal positions from you broker.
          </p>
          <p className="mt-[29px]">
            <b className="text-[13px] text-[#e02020]">Risk Warning</b> : Forex is a highly leveraged product and involves large potential risk. So before making any transaction, you should ensure yourself that you fully understand the risks involved in Forex Market. Here we provide Forex signals by the experience on different market conditions, price action, market sensitivity, strategies, analysis and other trading rules; but we can't assure you that our every signals will work properly.
          </p>
        </div>

        <footer className="absolute right-0 bottom-0 left-0 h-[366px] rounded-b-[6px] border-t-[3px] border-t-[#3b5d80] bg-gradient-to-b from-[#eeeeee] to-white text-[12px] text-[#444444]">
          <div className="flex h-[249px] gap-[30px] pt-[26px] pl-[35px]">
            <div className="w-[378px]">
              <div className="flex h-[24px] justify-between border-b-2 border-b-[#e2e2e2] pt-[3px] pr-[10px] font-bold text-[#2a6da8]">
                <span>RECENTLY UPDATED POSTS</span>
                <span className="text-[#105a87]">See All . . »</span>
              </div>
              {posts.map((p) => (
                <div key={p} className="flex h-[27px] items-center border-b-2 border-b-[#e2e2e2]">
                  <span className="mr-[3px] ml-px h-[6px] w-[6px] rounded-full bg-[#5aa6e0]" />
                  {p}
                </div>
              ))}
            </div>
            <div className="w-[134px]">
              <FootTitle>FOREX KEY TOPICS</FootTitle>
              {['Money Management', 'Candlesticks Pattern', 'News Trading', 'Fibonacci trading', 'Chart Pattern Trading'].map((t) => (
                <div key={t} className="h-[23px] border-b-2 border-b-[#e2e2e2] leading-[21px] last:border-b-0">{t}</div>
              ))}
            </div>
            <div className="w-[133px]">
              <FootTitle>FOREX TOOLS</FootTitle>
              {['Fibonacci Calculator', 'Pivot Points Calculator'].map((t) => (
                <div key={t} className="h-[23px] border-b-2 border-b-[#e2e2e2] leading-[21px] last:border-b-0">{t}</div>
              ))}
            </div>
            <div className="w-[216px]">
              <FootTitle>OUR SERVICES</FootTitle>
              <div className="h-[23px] leading-[21px]">Email &amp; SMS Signals</div>
              <div className="mt-[25px] h-[21px] border-b-2 border-b-[#e2e2e2] text-[12px] leading-[18px] font-bold text-[#2a6da8]">Contact Us</div>
              <div className="leading-[22px] font-bold text-[#222222] italic">contact@forexfunction.com</div>
            </div>
          </div>
          <div className="flex h-[34px] items-center border-y border-y-[#e6edf5] bg-[#f8f8f8] text-[12.5px] text-[#888888]">
            {bottomLinks.map((l) => (
              <a key={l} className="flex h-[24px] items-center border-r border-r-[#dddddd] px-[10px] whitespace-nowrap">{l}</a>
            ))}
          </div>
          <div className="mt-[41px] text-center text-[10.8px] leading-[16px] text-[#2a4f73]">© ForexFunction All Rights Reserved 2014-15</div>
        </footer>

        <div className="absolute top-[450px] left-[954px] z-20 h-[72px] w-[199px] rounded-b-[10px] rounded-tl-[10px] border border-[#d0d8e4] bg-[#e6ebf4]">
          <div className="flex pt-[9px] pl-[10px]">
            <div className="flex h-[50px] w-[50px] shrink-0 items-center justify-center overflow-hidden bg-[#0a4a7c] text-[40px] leading-[50px] font-bold tracking-[-2px] italic">
              <span className="text-white">F</span>
              <span className="text-[#f7931e]">F</span>
            </div>
            <div className="ml-[5px]">
              <div className="font-['DejaVu_Sans',sans-serif] text-[11.5px] leading-[20px] font-bold whitespace-nowrap text-[#3d5f9c]">ForexFunction.com</div>
              <div className="mt-[3px] flex items-center">
                <span className="flex h-[20px] w-[49px] items-center justify-center rounded-[2px] bg-[#7b93c8] text-[12px] font-bold text-white">✓ Like</span>
                <span className="ml-[5px] text-[11px] whitespace-nowrap text-[#333333]">You like this.</span>
              </div>
            </div>
          </div>
          <div className="absolute -top-[10px] -right-[10px] flex h-[18px] w-[18px] items-center justify-center rounded-full border-2 border-[#d8d8d8] bg-[#555555] text-[11px] leading-none font-bold text-white shadow-[0_1px_2px_rgba(0,0,0,0.5)]">×</div>
        </div>
      </div>
    </div>
  );
}
